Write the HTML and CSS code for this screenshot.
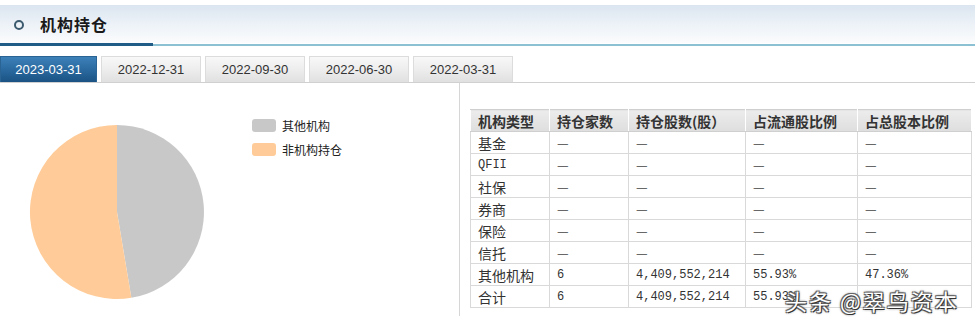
FILE: index.html
```html
<!DOCTYPE html>
<html lang="zh">
<head>
<meta charset="utf-8">
<title>机构持仓</title>
<link rel="stylesheet" href="styles.css">
</head>
<body>
<div class="page">
  <div class="header">
    <span class="ring"></span>
    <h2 class="title">机构持仓</h2>
  </div>
  <div class="rule"><span class="rule-dark"></span></div>
  <div class="tabs">
    <span class="tab active">2023-03-31</span>
    <span class="tab">2022-12-31</span>
    <span class="tab">2022-09-30</span>
    <span class="tab">2022-06-30</span>
    <span class="tab">2022-03-31</span>
  </div>
  <div class="content">
    <div class="chart">
      <svg class="pie" width="240" height="233" viewBox="0 0 240 233">
        <path d="M117,42 A87,87 0 0,1 131.36,214.8 L117,129 Z" fill="#c8c8c8"/>
        <path d="M131.36,214.8 A87,87 0 1,1 117,42 L117,129 Z" fill="#ffcc99"/>
      </svg>
      <ul class="legend">
        <li><span class="swatch grey"></span>其他机构</li>
        <li><span class="swatch orange"></span>非机构持仓</li>
      </ul>
    </div>
    <div class="tablepanel">
      <table class="data">
        <colgroup>
          <col class="c1"><col class="c2"><col class="c3"><col class="c4"><col class="c5">
        </colgroup>
        <thead>
          <tr><th>机构类型</th><th>持仓家数</th><th>持仓股数(股）</th><th>占流通股比例</th><th>占总股本比例</th></tr>
        </thead>
        <tbody>
          <tr><td>基金</td><td class="d">—</td><td class="d">—</td><td class="d">—</td><td class="d">—</td></tr>
          <tr><td class="n">QFII</td><td class="d">—</td><td class="d">—</td><td class="d">—</td><td class="d">—</td></tr>
          <tr><td>社保</td><td class="d">—</td><td class="d">—</td><td class="d">—</td><td class="d">—</td></tr>
          <tr><td>券商</td><td class="d">—</td><td class="d">—</td><td class="d">—</td><td class="d">—</td></tr>
          <tr><td>保险</td><td class="d">—</td><td class="d">—</td><td class="d">—</td><td class="d">—</td></tr>
          <tr><td>信托</td><td class="d">—</td><td class="d">—</td><td class="d">—</td><td class="d">—</td></tr>
          <tr><td>其他机构</td><td class="n">6</td><td class="n">4,409,552,214</td><td class="n">55.93%</td><td class="n">47.36%</td></tr>
          <tr><td>合计</td><td class="n">6</td><td class="n">4,409,552,214</td><td class="n">55.93%</td><td class="n"></td></tr>
        </tbody>
      </table>
    </div>
  </div>
  <div class="watermark">头条 @翠鸟资本</div>
</div>
</body>
</html>
```
FILE: styles.css
```css
* { box-sizing: border-box; }
html, body { margin: 0; padding: 0; background: #fff; }
body {
  font-family: "Noto Sans CJK SC", "Liberation Sans", sans-serif;
  color: #333;
  width: 975px;
  height: 317px;
  overflow: hidden;
}
.page { position: relative; width: 975px; height: 317px; }

.header {
  margin-top: 5px;
  height: 38px;
  display: flex;
  align-items: center;
  padding-left: 14px;
  background: linear-gradient(to bottom, #dbe5f0 0%, #eef3f8 55%, #fbfcfd 100%);
}
.ring {
  width: 10px;
  height: 10px;
  border: 2px solid #3c5a6e;
  border-radius: 50%;
  margin-right: 16px;
  margin-top: 2px;
}
.title {
  margin: 0;
  font-size: 16px;
  font-weight: bold;
  color: #1a1a1a;
  letter-spacing: 1px;
}

.rule {
  height: 3px;
  background: linear-gradient(to bottom, transparent 0, transparent 1px, #8cc1d3 1px, #8cc1d3 3px);
  display: flex;
}
.rule-dark { width: 153px; height: 3px; background: #1f5c86; }

.tabs {
  margin-top: 10px;
  display: flex;
  gap: 4px;
  height: 27px;
  border-bottom: 1px solid #d0d0d0;
  align-items: flex-end;
}
.tab {
  height: 26px;
  width: 100px;
  display: flex;
  align-items: center;
  justify-content: center;
  font-family: "Liberation Sans", sans-serif;
  font-size: 13px;
  color: #333;
  background: linear-gradient(to bottom, #f8f8f8 0%, #ececec 55%, #e0e0e0 100%);
  border: 1px solid #dcdcdc;
  border-bottom: none;
}
.tab.active {
  width: 97px;
  color: #fff;
  border-color: #2a6494;
  background: linear-gradient(to bottom, #3d80b8 0%, #2a6aa0 50%, #1b5283 100%);
}

.content {
  display: flex;
  height: 233px;
}
.chart {
  width: 460px;
  border-right: 1px solid #d6d6d6;
  display: flex;
  align-items: flex-start;
}
.pie { display: block; flex: none; }
.legend {
  list-style: none;
  margin: 35px 0 0 12px;
  padding: 0;
  font-size: 12px;
  color: #222;
}
.legend li {
  display: flex;
  align-items: center;
  height: 14px;
  margin-bottom: 10px;
}
.swatch {
  width: 24px;
  height: 13px;
  border-radius: 3px;
  margin-right: 6px;
}
.swatch.grey { background: #c8c8c8; }
.swatch.orange { background: #ffcc99; }

.tablepanel {
  padding: 26px 0 0 10px;
}
.data {
  border-collapse: collapse;
  width: 501px;
  table-layout: fixed;
  border: 1px solid #cfcfcf;
}
.c1 { width: 79px; }
.c2 { width: 79px; }
.c3 { width: 117px; }
.c4 { width: 112px; }
.c5 { width: 114px; }
.data th, .data td {
  height: 22px;
  padding: 0 0 0 7px;
  border: 1px solid #d9d9d9;
  text-align: left;
  white-space: nowrap;
  line-height: 20px;
}
.data th {
  font-size: 14px;
  font-weight: bold;
  color: #333;
  background: linear-gradient(to bottom, #ececec, #dedede);
  border-color: #cfcfcf #fff #cfcfcf #fff;
}
.data td {
  font-size: 14px;
  color: #333;
}
.data td.n {
  font-family: "Liberation Mono", monospace;
  font-size: 12px;
}
.data td.d {
  font-size: 13px;
  color: #444;
}

.watermark {
  position: absolute;
  left: 785px;
  top: 279px;
  font-size: 22px;
  color: #fff;
  letter-spacing: 2px;
  text-shadow: 1px 1px 0 #333, -1px -1px 0 #666, 1px -1px 0 #666, -1px 1px 0 #666, 0 0 3px #000;
}
```
